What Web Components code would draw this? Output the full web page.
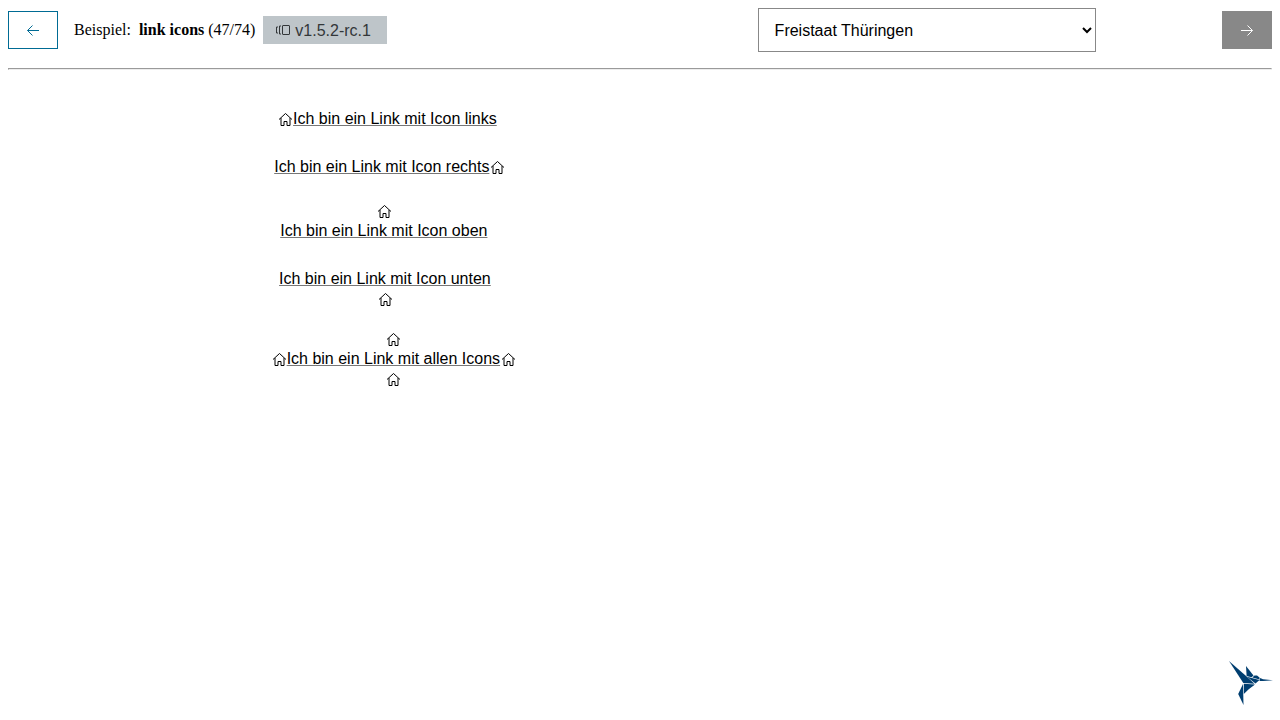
<!DOCTYPE html>
<html lang="de">
<head>
<meta charset="utf-8">
<meta name="viewport" content="width=device-width, initial-scale=1">
<title>link icons</title>
<style>
  body { margin: 8px; background: #fff; color: #000; font: 16px/24px "Liberation Serif", "Times New Roman", serif; }
</style>
</head>
<body>
<sample-app></sample-app>

<template id="t-icon">
  <style>
    :host { display: inline-flex; width: 16px; height: 16px; flex: none; }
    svg { display: block; width: 16px; height: 16px; fill: none; stroke: currentColor; stroke-width: 1; }
  </style>
  <svg viewBox="0 0 16 16" aria-hidden="true"><path></path></svg>
</template>

<template id="t-nav">
  <style>
    :host { display: block; flex: none; }
    button { display: flex; align-items: center; justify-content: center; box-sizing: border-box; width: 50px; height: 38px; margin: 0; padding: 0; border: 1px solid #006b94; border-radius: 0; background: #fff; color: #006b94; }
    :host([disabled]) button { border-color: #888; background: #888; color: #fff; }
  </style>
  <button type="button"><ui-icon></ui-icon></button>
</template>

<template id="t-badge">
  <style>
    :host { display: inline-flex; align-items: center; box-sizing: border-box; height: 28px; padding: 0 16px 0 12px; gap: 4px; background: #bec5c9; color: #333739; font-family: "Liberation Sans", Arial, sans-serif; white-space: nowrap; }
    span { padding-top: 2px; line-height: 22px; }
  </style>
  <ui-icon name="versions"></ui-icon><span><slot></slot></span>
</template>

<template id="t-theme">
  <style>
    :host { display: block; }
    select { box-sizing: border-box; width: 100%; height: 44px; margin: 0; padding: 0 0 0 12px; border: 1px solid #888; border-radius: 0; background: #fff; color: #000; font: 16px/24px "Liberation Sans", Arial, sans-serif; display: block; }
  </style>
  <select aria-label="Theme"><option>Freistaat Thüringen</option></select>
</template>

<template id="t-link">
  <style>
    :host { display: grid; grid-template-columns: 1fr auto 3fr; font-family: "Liberation Sans", Arial, sans-serif; }
    a { grid-column: 2; display: flex; flex-direction: column; align-items: center; color: #000; text-decoration: none; white-space: nowrap; }
    .row { display: flex; align-items: center; }
    .text { padding-top: 2px; line-height: 22px; text-decoration: underline 1px #777; }
    ui-icon { display: none; }
    :host([left]) .left, :host([right]) .right, :host([top]) .top, :host([bottom]) .bottom { display: inline-flex; }
  </style>
  <a href="#/link/icons">
    <ui-icon class="top" name="home"></ui-icon>
    <span class="row"><ui-icon class="left" name="home"></ui-icon><span class="text"><slot></slot></span><ui-icon class="right" name="home"></ui-icon></span>
    <ui-icon class="bottom" name="home"></ui-icon>
  </a>
</template>

<template id="t-bird">
  <style>
    :host { display: block; position: fixed; right: 7px; bottom: 15px; width: 44px; height: 44px; }
    svg { display: block; width: 44px; height: 44px; fill: #003e70; }
  </style>
  <svg viewBox="0 0 44 44" role="img" aria-label="Kolibri">
    <path d="M0 0 16.500 14.500 25.500 22.800 14.300 22Z"/>
    <path d="M17 5 24.500 14.500 22.500 16.300 17.600 15Z"/>
    <path d="M17.800 15.800 22.800 17 30.500 19 26.500 22.500Z"/>
    <path d="M23.300 16.500 25.500 14.600 28 14.500 30.500 16.500 30.600 18.400Z"/>
    <path d="M31.200 17 34 18.200 44 19.200 34 20 30.500 20Z"/>
    <path d="M14.800 22.800 26 23.600 20 28 14.800 33Z"/>
    <path d="M14 23 14.500 44 9.200 33Z"/>
  </svg>
</template>

<template id="t-app">
  <style>
    :host { display: block; }
    header { display: flex; align-items: center; gap: 16px; }
    .title { display: flex; align-items: center; gap: 8px; white-space: nowrap; }
    theme-select { width: 338px; margin: 0 calc(10% - 16px) 0 auto; }
    hr { margin: 16px 0 0; border: 1px solid; border-color: #9a9a9a #ededed #ededed #9a9a9a; }
    main { display: flex; flex-direction: column; gap: 24px; padding: 36px 16px; }
  </style>
  <header>
    <nav-button label="Zurück" icon="left"></nav-button>
    <div class="title"><span>Beispiel:</span><span><strong>link icons</strong> (47/74)</span><version-badge>v1.5.2-rc.1</version-badge></div>
    <theme-select></theme-select>
    <nav-button label="Weiter" icon="right" disabled></nav-button>
  </header>
  <hr>
  <main>
    <icon-link left>Ich bin ein Link mit Icon links</icon-link>
    <icon-link right>Ich bin ein Link mit Icon rechts</icon-link>
    <icon-link top>Ich bin ein Link mit Icon oben</icon-link>
    <icon-link bottom>Ich bin ein Link mit Icon unten</icon-link>
    <icon-link left right top bottom>Ich bin ein Link mit allen Icons</icon-link>
  </main>
  <hummingbird-logo></hummingbird-logo>
</template>

<script>
  const icons = {
    home: 'M2 9.500 8.500 3.500l6.500 6M4 8v7.500h3v-4h3v4h3V8',
    left: 'M14 8.500H2.500M7.500 3.500l-5 5 5 5',
    right: 'M2 8.500H13.500M8.500 3.500l5 5-5 5',
    versions: 'M8 3.500h6q.5 0 .5.500v8q0 .5-.5.500H8q-.5 0-.5-.5V4q0-.5.500-.5M6 4H4.500v8H6M3 5H1.500v6H3'
  };
  class Base extends HTMLElement {
    constructor() {
      super();
      this.attachShadow({ mode: 'open' }).append(
        document.getElementById(this.constructor.template).content.cloneNode(true));
    }
  }
  customElements.define('ui-icon', class extends Base {
    static template = 't-icon';
    static observedAttributes = ['name'];
    attributeChangedCallback(_, __, name) {
      this.shadowRoot.querySelector('path').setAttribute('d', icons[name] || '');
    }
  });
  customElements.define('nav-button', class extends Base {
    static template = 't-nav';
    connectedCallback() {
      const button = this.shadowRoot.querySelector('button');
      button.setAttribute('aria-label', this.getAttribute('label'));
      button.disabled = this.hasAttribute('disabled');
      this.shadowRoot.querySelector('ui-icon').setAttribute('name', this.getAttribute('icon'));
    }
  });
  customElements.define('version-badge', class extends Base { static template = 't-badge'; });
  customElements.define('theme-select', class extends Base { static template = 't-theme'; });
  customElements.define('icon-link', class extends Base { static template = 't-link'; });
  customElements.define('hummingbird-logo', class extends Base { static template = 't-bird'; });
  customElements.define('sample-app', class extends Base { static template = 't-app'; });
</script>
</body>
</html>
